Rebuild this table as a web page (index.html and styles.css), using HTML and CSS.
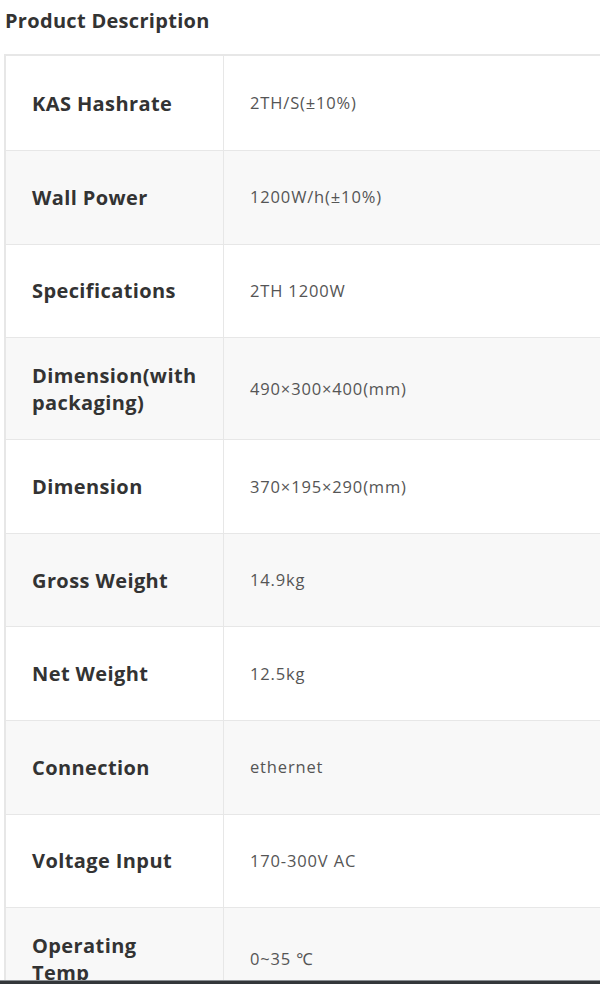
FILE: index.html
```html
<!DOCTYPE html>
<html>
<head>
<meta charset="utf-8">
<link rel="stylesheet" href="styles.css">
</head>
<body>
<h2 class="title">Product Description</h2>
<table class="spec">
  <tbody>
    <tr><th>KAS Hashrate</th><td>2TH/S(±10%)</td></tr>
    <tr><th>Wall Power</th><td>1200W/h(±10%)</td></tr>
    <tr><th>Specifications</th><td>2TH 1200W</td></tr>
    <tr><th>Dimension(with packaging)</th><td>490×300×400(mm)</td></tr>
    <tr><th>Dimension</th><td>370×195×290(mm)</td></tr>
    <tr><th>Gross Weight</th><td>14.9kg</td></tr>
    <tr><th>Net Weight</th><td>12.5kg</td></tr>
    <tr><th>Connection</th><td>ethernet</td></tr>
    <tr><th>Voltage Input</th><td>170-300V AC</td></tr>
    <tr><th>Operating Temp</th><td>0~35 ℃</td></tr>
  </tbody>
</table>
<div class="bottombar"></div>
</body>
</html>
```
FILE: styles.css
```css
html, body {
  margin: 0;
  padding: 0;
  background: #ffffff;
  overflow: hidden;
}
body {
  font-family: "Open Sans", "Noto Sans", sans-serif;
  color: #333;
}
.title {
  margin: 0;
  padding: 7px 0 0 5px;
  font-size: 20px;
  line-height: 27px;
  font-weight: 700;
  letter-spacing: 0.3px;
  color: #333;
}
.spec {
  margin: 20px 0 0 4px;
  border-collapse: collapse;
  border: 2px solid #e7e7e7;
  width: 700px;
  table-layout: fixed;
}
.spec tr {
  height: 93.6px;
}
.spec tr:first-child {
  height: 95.6px;
}
.spec tr:nth-child(even) {
  background: #f8f8f8;
}
.spec th,
.spec td {
  border: 1px solid #e7e7e7;
  padding: 23.5px 26px;
  vertical-align: middle;
  text-align: left;
}
.spec th {
  width: 165px;
  font-size: 20px;
  line-height: 27px;
  font-weight: 700;
  letter-spacing: 0.4px;
  color: #333;
}
.spec td {
  font-size: 16.5px;
  line-height: 24px;
  letter-spacing: 0.85px;
  color: #555;
}
.bottombar {
  position: fixed;
  left: 0;
  right: 0;
  bottom: 0;
  height: 3px;
  background: #33373a;
  border-top: 1px solid #8a8f93;
}
```
